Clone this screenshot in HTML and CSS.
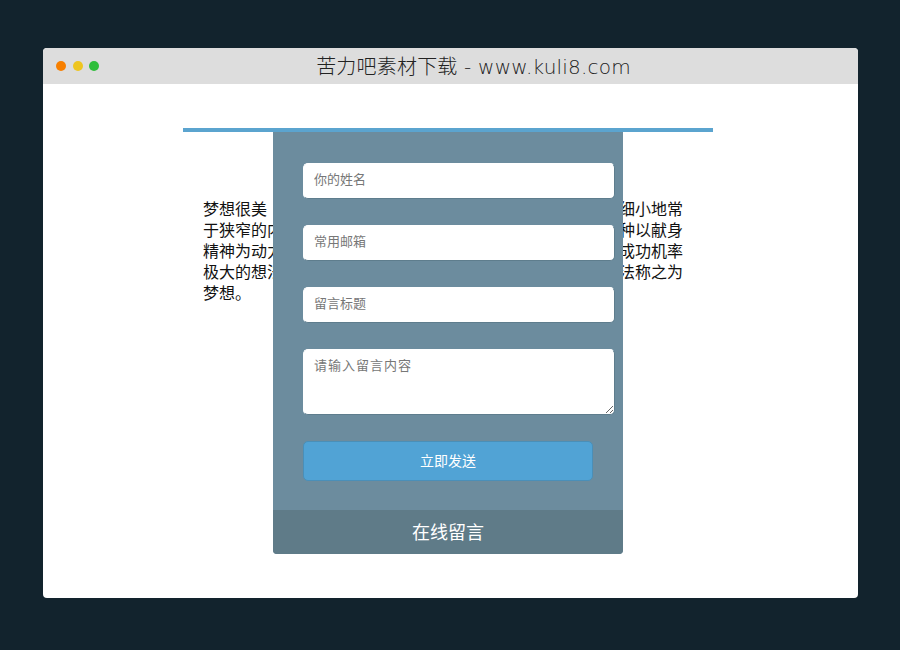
FILE: index.html
```html
<!DOCTYPE html>
<html lang="zh-CN">
<head>
    <meta charset="UTF-8">
    <meta name="viewport" content="width=device-width, initial-scale=1.0">
    <title>在线留言</title>
    <link rel="stylesheet" href="styles.css">
</head>
<body>
    <div class="window">
        <div class="title-bar">
            <div class="dots">
                <span class="dot dot-orange"></span>
                <span class="dot dot-yellow"></span>
                <span class="dot dot-green"></span>
            </div>
            <div class="title">苦力吧素材下载 - www.kuli8.com</div>
        </div>
        <div class="content">
            <div class="panel">
                <p class="intro">梦想很美　它总是不愿意安于现状，不愿意被缩得太过于纤细小地常于狭窄的内心世界之中，它是一个人的追求，也应当算是一种以献身精神为动力的坚持，只有不断努力才能够提高自己最终获得成功机率极大的想法，如果没有实际的行动，那么这样的空谈终究无法称之为梦想。</p>
                <form class="contact-form">
                    <div class="fields">
                        <input class="field" type="text" placeholder="你的姓名">
                        <input class="field" type="text" placeholder="常用邮箱">
                        <input class="field" type="text" placeholder="留言标题">
                        <textarea class="field field-area" placeholder="请输入留言内容"></textarea>
                        <button class="send-btn" type="button">立即发送</button>
                    </div>
                    <div class="form-footer">在线留言</div>
                </form>
            </div>
        </div>
    </div>
</body>
</html>
```

FILE: styles.css
```css
* {
    margin: 0;
    padding: 0;
    box-sizing: border-box;
    font-family: "Liberation Sans", "Noto Sans CJK SC", sans-serif;
}

body {
    background-color: #12232d;
    height: 650px;
    padding: 48px 42px 52px 43px;
    overflow: hidden;
}

.window {
    height: 550px;
    background: white;
    border-radius: 4px;
    overflow: hidden;
}

.title-bar {
    height: 36px;
    background-color: #dddddd;
    display: flex;
    align-items: center;
}

.dots {
    display: flex;
    gap: 6.5px;
    padding-left: 13px;
}

.dot {
    width: 10px;
    height: 10px;
    border-radius: 50%;
}

.dot-orange {
    background-color: #f77f00;
}

.dot-yellow {
    background-color: #eec51f;
}

.dot-green {
    background-color: #2fbe3b;
}

.title {
    flex: 1;
    padding: 0 10px 2px 0;
    text-align: center;
    color: #222;
    font-family: "DejaVu Sans", "Noto Sans CJK SC", sans-serif;
    font-size: 20px;
    font-weight: 300;
    letter-spacing: 0.2px;
}

.content {
    padding: 44px 0 0 140px;
}

.panel {
    width: 530px;
    border-top: 4px solid #5ba4cf;
    position: relative;
}

.intro {
    padding: 67px 20px 0;
    font-size: 16px;
    line-height: 21px;
    color: #111;
}

.contact-form {
    position: absolute;
    top: 0;
    left: 90px;
    width: 350px;
    height: 422px;
    background-color: #6c8c9e;
    border-radius: 0 0 4px 4px;
    overflow: hidden;
}

.fields {
    display: flex;
    flex-direction: column;
    align-items: flex-start;
    gap: 26px;
    padding: 31px 8px 0 30px;
}

.field {
    display: block;
    width: 312px;
    height: 36px;
    padding: 0 10px 3px;
    background: white;
    border: 1px solid #fff;
    border-bottom-color: #5e7d8d;
    border-right-color: #5e7d8d;
    border-radius: 5px;
    font-size: 13px;
    color: #333;
}

.field::placeholder {
    color: #777;
}

.field-area {
    height: 66px;
    padding: 7px 10px;
    letter-spacing: 1px;
    line-height: 18px;
}

.send-btn {
    width: 290px;
    height: 40px;
    padding-bottom: 2px;
    background-color: #51a3d5;
    border: 1px solid #4a8fb8;
    border-radius: 5px;
    color: white;
    font-size: 14px;
}

.form-footer {
    position: absolute;
    left: 0;
    right: 0;
    bottom: 0;
    height: 44px;
    line-height: 46px;
    background-color: #5f7b88;
    text-align: center;
    color: white;
    font-size: 18px;
}
```
